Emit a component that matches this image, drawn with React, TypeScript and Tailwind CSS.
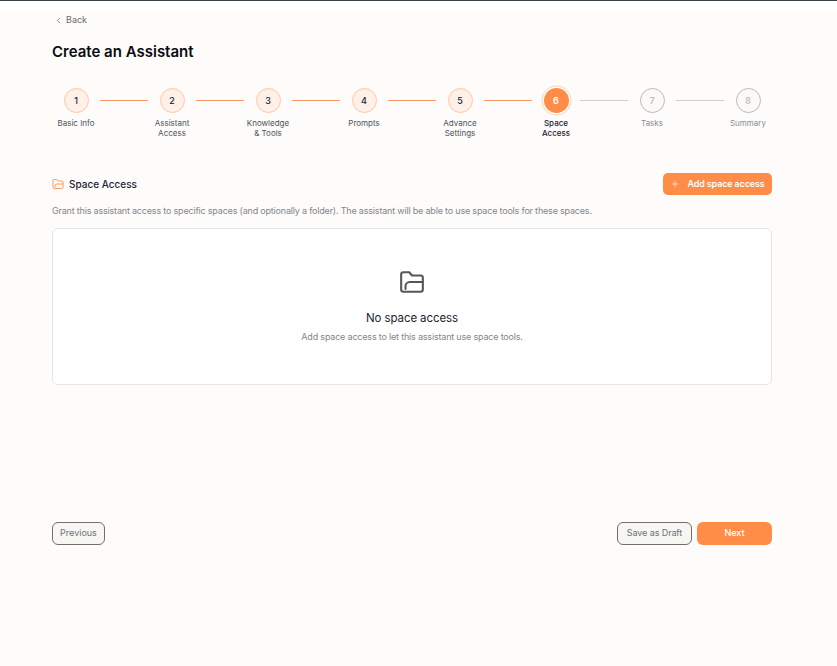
import React from 'react';
import { ChevronLeft, Plus } from 'lucide-react';

const steps = [
  { n: 1, label: ['Basic Info'], state: 'done' },
  { n: 2, label: ['Assistant', 'Access'], state: 'done' },
  { n: 3, label: ['Knowledge', '& Tools'], state: 'done' },
  { n: 4, label: ['Prompts'], state: 'done' },
  { n: 5, label: ['Advance', 'Settings'], state: 'done' },
  { n: 6, label: ['Space', 'Access'], state: 'active' },
  { n: 7, label: ['Tasks'], state: 'todo' },
  { n: 8, label: ['Summary'], state: 'todo' },
];

const FolderIcon = ({ size, strokeWidth, className }: { size: number; strokeWidth: number; className: string }) => (
  <svg
    width={size}
    height={size}
    viewBox="0 0 24 24"
    fill="none"
    stroke="currentColor"
    strokeWidth={strokeWidth}
    strokeLinecap="round"
    strokeLinejoin="round"
    className={className}
  >
    <path d="M4 21a2 2 0 0 1-2-2V5a2 2 0 0 1 2-2h5.5l2.5 3h8a2 2 0 0 1 2 2v11a2 2 0 0 1-2 2Z" />
    <path d="M6 18.5v-2.5a4 4 0 0 1 4-4h12" />
  </svg>
);

const Step = ({ n, label, state }: { n: number; label: string[]; state: string }) => {
  return (
    <div className="w-[48px] flex flex-col items-center shrink-0">
      {state === 'active' ? (
        <div className="w-[25px] h-[25px] rounded-full bg-[#ff8c47] text-white text-[9px] font-semibold flex items-center justify-center shadow-[0_0_0_1.5px_#fdfcfa,0_0_0_2.5px_#ffd3b8]">
          {n}
        </div>
      ) : state === 'done' ? (
        <div className="w-[25px] h-[25px] rounded-full bg-[#fff0e8] border border-[#ffc8a6] text-[#1c2333] text-[9px] font-medium flex items-center justify-center">
          {n}
        </div>
      ) : (
        <div className="w-[25px] h-[25px] rounded-full bg-[#fbfaf8] border border-[#b9b9b6] text-[#b5b5b2] text-[9px] font-medium flex items-center justify-center">
          {n}
        </div>
      )}
      <div
        className={`mt-[5px] text-[8px] leading-[10px] text-center whitespace-nowrap ${
          state === 'active' ? 'text-[#1c2333] font-medium' : state === 'done' ? 'text-[#4d5260]' : 'text-[#8b8d92]'
        }`}
      >
        {label.map((l) => (
          <div key={l}>{l}</div>
        ))}
      </div>
    </div>
  );
};

export default function App() {
  return (
    <div className="min-h-[666px] bg-white font-['Inter',sans-serif] border-t border-[#3a3f47]">
      <div className="mt-[10px] min-h-[655px] bg-[#fdfcfa] pl-[52px] pr-[65px]">
        {/* Back link */}
        <div className="flex items-center gap-[3px] pl-[2px] pt-0 h-[18px] text-[9px] text-[#6b6b6b]">
          <ChevronLeft size={9} strokeWidth={1.75} className="text-[#55565a]" />
          <span>Back</span>
        </div>

        <h1 className="mt-[13px] text-[15px] leading-[20px] font-semibold text-[#0b0d12]">Create an Assistant</h1>

        {/* Stepper */}
        <div className="mt-[26px] flex items-start h-[62px]">
          {steps.map((s, i) => (
            <React.Fragment key={s.n}>
              <Step n={s.n} label={s.label} state={s.state} />
              {i < steps.length - 1 && (
                <div className={`w-[48px] h-px mt-[12px] shrink-0 ${i < 5 ? 'bg-[#f59a67]' : 'bg-[#cfcfcc]'}`} />
              )}
            </React.Fragment>
          ))}
        </div>

        {/* Section header */}
        <div className="mt-[23px] flex items-center justify-between h-[22px]">
          <div className="flex items-center gap-[5px]">
            <FolderIcon size={12} strokeWidth={2} className="text-[#ff9a5e]" />
            <span className="text-[10px] leading-[20px] -mt-[1px] font-medium text-[#1c2333]">Space Access</span>
          </div>
          <button className="w-[109px] h-[22px] rounded-[5px] bg-[#ff8c47] text-white text-[9px] font-semibold tracking-[-0.15px] flex items-center justify-center gap-[7px]">
            <Plus size={10} strokeWidth={1.5} />
            Add space access
          </button>
        </div>

        <p className="mt-[10px] text-[9px] leading-[12px] tracking-[-0.19px] text-[#83868c]">
          Grant this assistant access to specific spaces (and optionally a folder). The assistant will be able to use space tools for these spaces.
        </p>

        {/* Empty state */}
        <div className="mt-[11px] h-[157px] rounded-[6px] border border-[#e7e6e4] bg-white flex flex-col items-center pt-[40px]">
          <FolderIcon size={26} strokeWidth={1.9} className="text-[#55565a]" />
          <div className="mt-[15px] text-[11.5px] leading-[16px] tracking-[-0.1px] font-normal text-[#1c2333]">No space access</div>
          <div className="mt-[5px] text-[9px] leading-[12px] tracking-[-0.19px] text-[#83868c]">Add space access to let this assistant use space tools.</div>
        </div>

        {/* Footer actions */}
        <div className="mt-[137px] flex items-center justify-between">
          <button className="w-[53px] h-[23px] pb-px rounded-[6px] border border-[#6f6f6f] bg-[#f7f6f3] text-[9px] text-[#6b7080]">Previous</button>
          <div className="flex items-center gap-[5px]">
            <button className="w-[75px] h-[23px] pb-px rounded-[6px] border border-[#6f6f6f] bg-[#f7f6f3] text-[9px] tracking-[-0.1px] text-[#6b7080]">Save as Draft</button>
            <button className="w-[75px] h-[23px] pb-px rounded-[6px] bg-[#ff8c47] text-white text-[9px] font-medium">Next</button>
          </div>
        </div>
      </div>
    </div>
  );
}
